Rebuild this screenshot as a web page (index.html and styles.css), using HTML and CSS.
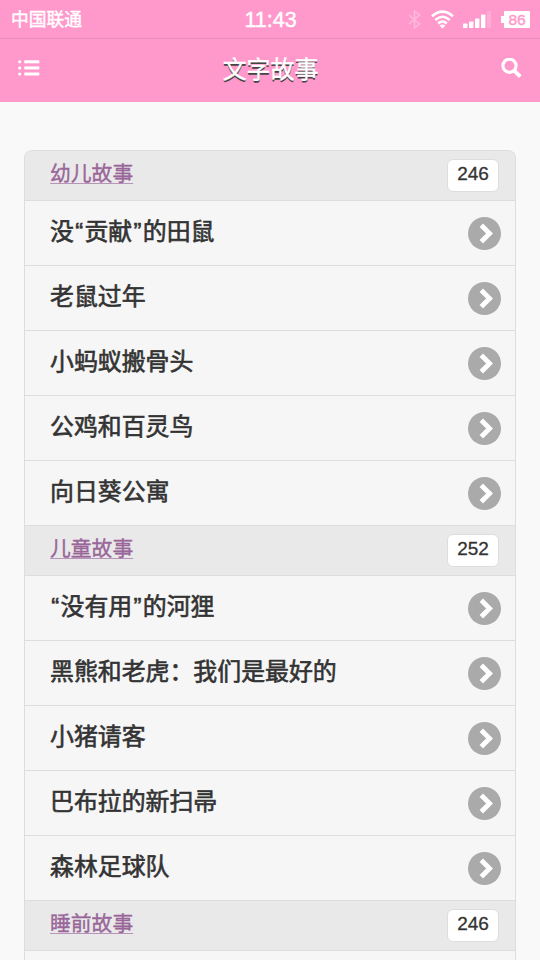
FILE: index.html
```
<!DOCTYPE html>
<html lang="zh-CN">
<head>
<meta charset="utf-8">
<title>文字故事</title>
<link rel="stylesheet" href="styles.css">
</head>
<body>
<svg class="defs" width="0" height="0"><symbol id="arrow" viewBox="0 0 33 33"><circle cx="16.5" cy="16.5" r="16.5" fill="#aaa"/><path d="M13.3 8.2 21.6 16.5 13.3 24.8" fill="none" stroke="#fff" stroke-width="4.8"/></symbol></svg>
<div class="status">
  <span class="carrier">中国联通</span>
  <span class="time">11:43</span>
  <span class="indicators">
    <svg class="bluetooth" width="13" height="19" viewBox="0 0 13 19"><path d="M1 5 11.5 14 6.5 18V1L11.5 5 1 14" fill="none" stroke="#fff" stroke-width="1.6"/></svg>
    <svg class="wifi" width="23" height="19" viewBox="0 0 23 19"><g fill="none" stroke="#fff" stroke-width="2.5"><path d="M1 6.2Q11.5-3 22 6.2"/><path d="M4.3 10Q11.5 3.6 18.7 10"/><path d="M7.2 13.5Q11.5 9.6 15.8 13.5"/></g><path d="M8.6 15.6Q11.5 13.4 14.4 15.6L11.5 18.5Z" fill="#fff"/></svg>
    <svg class="signal" width="28" height="17" viewBox="0 0 28 17" fill="#fff"><rect y="12.5" width="4.4" height="4.5" rx=".8"/><rect x="6" y="10.5" width="4.4" height="6.5" rx=".8"/><rect x="12" y="7.5" width="4.4" height="9.5" rx=".8"/><rect x="18" y="3.5" width="4.4" height="13.5" rx=".8"/><rect x="24" width="4" height="17" rx=".8" opacity=".2"/></svg>
    <span class="battery">86</span>
  </span>
</div>
<header class="bar">
  <svg width="22" height="16" viewBox="0 0 22 16" fill="#fff"><circle cx="1.7" cy="1.8" r="1.5"/><circle cx="1.7" cy="8" r="1.5"/><circle cx="1.7" cy="14" r="1.5"/><rect x="6.3" y=".3" width="15" height="3"/><rect x="6.3" y="6.4" width="15" height="3"/><rect x="6.3" y="12.5" width="15" height="3"/></svg>
  <h1>文字故事</h1>
  <svg width="21" height="21" viewBox="0 0 21 21" fill="none" stroke="#fff"><circle cx="8.5" cy="7.8" r="6.6" stroke-width="3.1"/><path d="m13.2 12.6 6 6" stroke-width="3.8"/></svg>
</header>
<ul class="list">
  <li class="divider"><a>幼儿故事</a><span class="count">246</span></li>
  <li class="story"><span>没<i>“</i>贡献<i>”</i>的田鼠</span><svg><use href="#arrow"/></svg></li>
  <li class="story"><span>老鼠过年</span><svg><use href="#arrow"/></svg></li>
  <li class="story"><span>小蚂蚁搬骨头</span><svg><use href="#arrow"/></svg></li>
  <li class="story"><span>公鸡和百灵鸟</span><svg><use href="#arrow"/></svg></li>
  <li class="story"><span>向日葵公寓</span><svg><use href="#arrow"/></svg></li>
  <li class="divider"><a>儿童故事</a><span class="count">252</span></li>
  <li class="story"><span><i>“</i>没有用<i>”</i>的河狸</span><svg><use href="#arrow"/></svg></li>
  <li class="story"><span>黑熊和老虎：我们是最好的</span><svg><use href="#arrow"/></svg></li>
  <li class="story"><span>小猪请客</span><svg><use href="#arrow"/></svg></li>
  <li class="story"><span>巴布拉的新扫帚</span><svg><use href="#arrow"/></svg></li>
  <li class="story"><span>森林足球队</span><svg><use href="#arrow"/></svg></li>
  <li class="divider"><a>睡前故事</a><span class="count">246</span></li>
</ul>
</body>
</html>
```
FILE: styles.css
```
* { box-sizing: border-box; }
body {
  margin: 0;
  background: #f9f9f9;
  color: #333;
  font-family: "Liberation Sans", "Noto Sans CJK SC", sans-serif;
}
.defs { position: absolute; }
.status {
  display: grid;
  grid-template-columns: 1fr auto 1fr;
  align-items: center;
  height: 39px;
  padding: 0 10px 0 11px;
  background: #ff99cc;
  border-bottom: 1px solid #eb8dbb;
  color: #fff;
}
.carrier { font-size: 17.8px; line-height: 36px; padding-top: 2px; -webkit-text-stroke: .4px #fff; }
.time { font-size: 21.5px; line-height: 36px; padding-top: 2px; -webkit-text-stroke: .4px #fff; }
.indicators { display: flex; justify-content: flex-end; align-items: center; }
.bluetooth { opacity: .3; margin-right: 10px; }
.wifi { margin-right: 9px; }
.signal { margin-right: 13px; }
.battery {
  position: relative;
  width: 26px;
  height: 17px;
  border-radius: 1px;
  background: #fff;
  color: #ff99cc;
  font-size: 15.5px;
  line-height: 18px;
  text-align: center;
  -webkit-text-stroke: .4px #ff99cc;
}
.battery::before {
  content: "";
  position: absolute;
  left: -3px;
  top: 5px;
  width: 3px;
  height: 7px;
  background: #fff;
}
.bar {
  display: flex;
  justify-content: space-between;
  align-items: center;
  height: 63px;
  padding: 0 18px 5px;
  background: #ff99cc;
}
.bar h1 {
  margin: 4px 0 0;
  color: #fff;
  font-size: 23.9px;
  font-weight: 400;
  line-height: 36px;
  text-shadow: 0 1.5px 0 #444;
  -webkit-text-stroke: .4px #fff;
}
.list {
  height: 810px;
  margin: 48px 24px 0;
  padding: 0;
  list-style: none;
  border: solid #ddd;
  border-width: 0 1px;
  border-radius: 8px 8px 0 0;
  background: #f6f6f6;
  overflow: hidden;
}
.list li {
  display: flex;
  justify-content: space-between;
  align-items: center;
  border-top: 1px solid #ddd;
}
.list li:first-child { border-radius: 7px 7px 0 0; }
.list li:last-child { height: 51px; border-bottom: 1px solid #ddd; }
.divider { height: 50px; padding: 0 16px 0 25px; background: #e9e9e9; }
.divider a {
  color: #996699;
  font-size: 20.8px;
  line-height: 30px;
  margin-bottom: 3px;
  text-decoration: underline 1px #b894b8;
  text-underline-offset: 2px;
  -webkit-text-stroke: .35px #996699;
}
.count {
  width: 52px;
  height: 33px;
  border: 1px solid #ddd;
  border-radius: 6px;
  background: #fff;
  font-size: 19px;
  line-height: 28px;
  text-align: center;
  -webkit-text-stroke: .3px #333;
}
.story { height: 65px; padding: 0 14px 0 25px; }
.story span {
  font-size: 23.9px;
  line-height: 36px;
  margin-bottom: 2px;
  -webkit-text-stroke: .6px #333;
}
.story i { padding: 0 1.3px; font-style: normal; }
.story svg { width: 33px; height: 33px; }
```
